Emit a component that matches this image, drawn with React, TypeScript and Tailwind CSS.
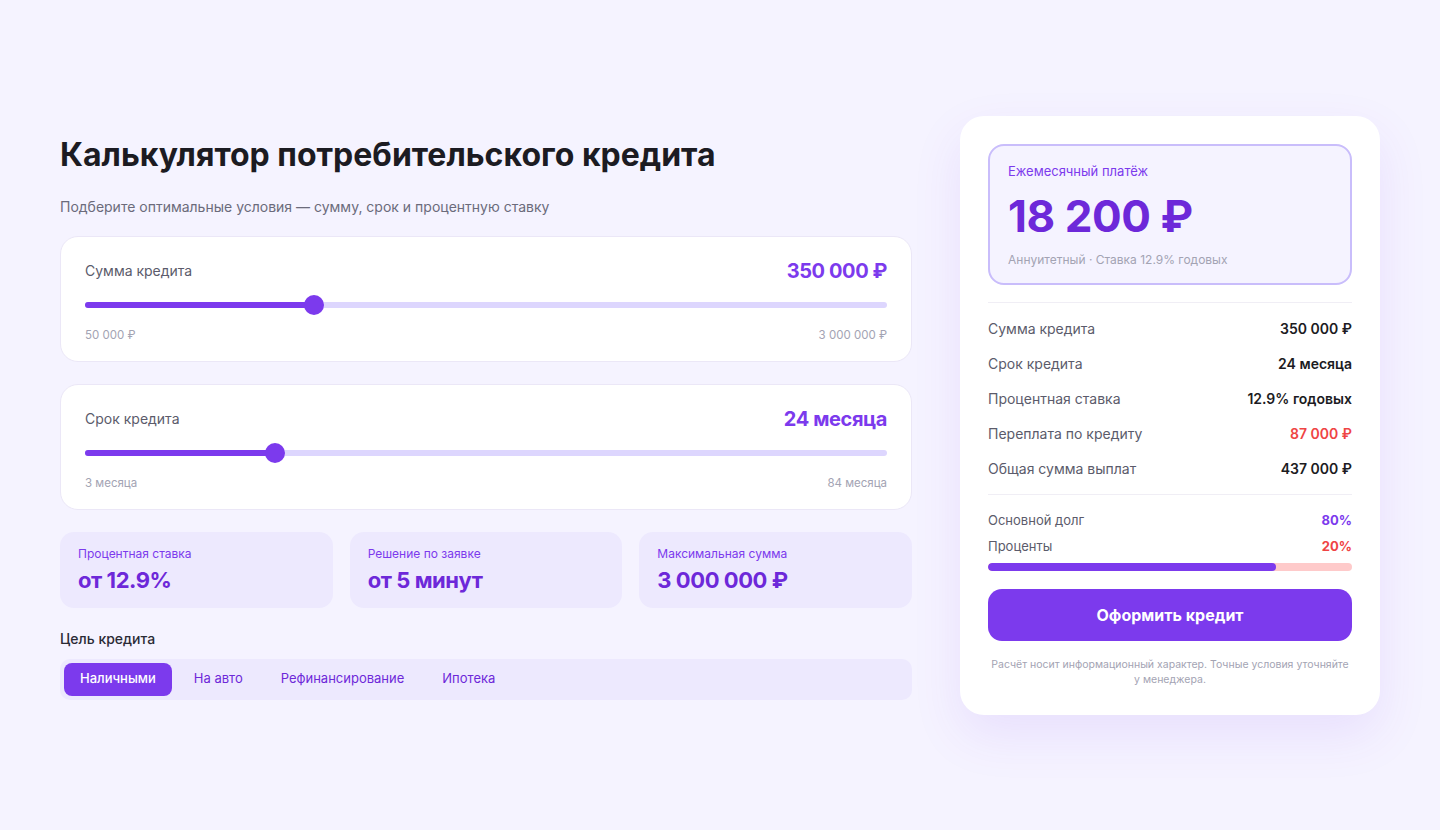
import React from "react";

type SliderCardProps = {
  label: string;
  value: string;
  min: string;
  max: string;
  percent: number;
};

function SliderCard({ label, value, min, max, percent }: SliderCardProps) {
  return (
    <div className="rounded-[18px] border border-[#ebe7f7] bg-white px-6 pt-5 pb-[17px]">
      <div className="flex h-7 items-center justify-between">
        <span className="text-[14px] text-[#5b5b6b]">{label}</span>
        <span className="text-[20px] font-bold tracking-[-0.02em] text-[#7c3aed]">{value}</span>
      </div>
      <div className="relative mt-[10px] flex h-5 items-center">
        <div className="h-1.5 w-full rounded-full bg-[#ddd6fe]" />
        <div
          className="absolute left-0 h-1.5 rounded-full bg-[#7c3aed]"
          style={{ width: `${percent}%` }}
        />
        <div
          className="absolute h-5 w-5 -translate-x-1/2 rounded-full bg-[#7c3aed]"
          style={{ left: `${percent}%` }}
        />
      </div>
      <div className="mt-[13px] flex h-4 items-center justify-between text-[11.5px] text-[#a3a3b3]">
        <span>{min}</span>
        <span>{max}</span>
      </div>
    </div>
  );
}

const stats = [
  { label: "Процентная ставка", value: "от 12.9%" },
  { label: "Решение по заявке", value: "от 5 минут" },
  { label: "Максимальная сумма", value: "3 000 000 ₽" },
];

const tabs = ["Наличными", "На авто", "Рефинансирование", "Ипотека"];

const rows = [
  { label: "Сумма кредита", value: "350 000 ₽", red: false },
  { label: "Срок кредита", value: "24 месяца", red: false },
  { label: "Процентная ставка", value: "12.9% годовых", red: false },
  { label: "Переплата по кредиту", value: "87 000 ₽", red: true },
  { label: "Общая сумма выплат", value: "437 000 ₽", red: false },
];

export default function App() {
  const principal = 79;

  return (
    <div
      className="flex min-h-[830px] w-full items-center justify-center bg-[#f5f3ff]"
      style={{ fontFamily: "Inter, 'Noto Sans', sans-serif" }}
    >
      <div className="flex w-[1320px] items-center gap-12">
        {/* left column */}
        <div className="flex w-[852px] flex-col pt-1">
          <h1 className="text-[32px] font-bold leading-10 text-[#1c1b22]">
            Калькулятор потребительского кредита
          </h1>
          <p className="mt-[22px] text-[14px] leading-5 text-[#6b6b7b]">
            Подберите оптимальные условия — сумму, срок и процентную ставку
          </p>

          <div className="mt-[19px] flex flex-col gap-[22px]">
            <SliderCard
              label="Сумма кредита"
              value="350 000 ₽"
              min="50 000 ₽"
              max="3 000 000 ₽"
              percent={28.6}
            />
            <SliderCard
              label="Срок кредита"
              value="24 месяца"
              min="3 месяца"
              max="84 месяца"
              percent={23.7}
            />

            <div className="grid grid-cols-3 gap-[17px]">
              {stats.map((s) => (
                <div
                  key={s.label}
                  className="rounded-[14px] bg-[#ede9fe] px-[18px] pt-[14px] pb-[14px]"
                >
                  <div className="text-[12px] leading-4 text-[#7c3aed]">{s.label}</div>
                  <div className="mt-1 text-[22px] font-bold leading-7 tracking-[-0.02em] text-[#6d28d9]">
                    {s.value}
                  </div>
                </div>
              ))}
            </div>
          </div>

          <div className="mt-[21px] text-[14px] font-medium leading-5 text-[#2a2a35]">
            Цель кредита
          </div>
          <div className="mt-[10px] flex gap-1.5 rounded-[10px] bg-[#ede9fe] p-1">
            {tabs.map((t, i) => (
              <div
                key={t}
                className={
                  i === 0
                    ? "flex h-[33px] items-center rounded-lg bg-[#7c3aed] px-4 text-[13px] font-medium text-white"
                    : "flex h-[33px] items-center rounded-lg px-4 text-[13px] text-[#6d28d9]"
                }
              >
                {t}
              </div>
            ))}
          </div>
        </div>

        {/* right card */}
        <div className="flex w-[420px] flex-col rounded-[24px] bg-white px-7 pt-7 pb-7 shadow-[0_20px_50px_rgba(124,58,237,0.10)]">
          <div className="rounded-[16px] border-2 border-[#c9bdfb] bg-[#f5f3ff] px-[18px] pt-4 pb-[15px]">
            <div className="text-[13px] leading-[18px] text-[#7c3aed]">Ежемесячный платёж</div>
            <div className="mt-3 text-[44px] font-bold leading-[48px] tracking-[-0.01em] text-[#6d28d9]">
              18 200 ₽
            </div>
            <div className="mt-3 text-[12px] leading-4 text-[#a3a3b3]">
              Аннуитетный · Ставка 12.9% годовых
            </div>
          </div>

          <div className="mt-[17px] h-px bg-[#f0eef5]" />
          <div className="py-2">
            {rows.map((r) => (
              <div key={r.label} className="flex h-[35px] items-center justify-between text-[14px]">
                <span className="text-[#5b5b6b]">{r.label}</span>
                <span className={r.red ? "font-semibold text-[#ef4444]" : "font-semibold text-[#1c1b22]"}>
                  {r.value}
                </span>
              </div>
            ))}
          </div>
          <div className="h-px bg-[#f0eef5]" />

          <div className="mt-4 flex flex-col gap-2 text-[13px] leading-[18px]">
            <div className="flex justify-between">
              <span className="text-[#5b5b6b]">Основной долг</span>
              <span className="font-bold text-[#7c3aed]">80%</span>
            </div>
            <div className="flex justify-between">
              <span className="text-[#5b5b6b]">Проценты</span>
              <span className="font-bold text-[#ef4444]">20%</span>
            </div>
          </div>
          <div className="mt-2 flex h-2 overflow-hidden rounded-full bg-[#fecaca]">
            <div className="h-full rounded-full bg-[#7c3aed]" style={{ width: `${principal}%` }} />
          </div>

          <button className="mt-[18px] h-[52px] w-full rounded-[14px] bg-[#7c3aed] text-[16px] font-bold text-white">
            Оформить кредит
          </button>

          <p className="mt-4 text-center text-[10.5px] leading-[15px] text-[#a3a3b3]">
            Расчёт носит информационный характер. Точные условия уточняйте у менеджера.
          </p>
        </div>
      </div>
    </div>
  );
}
